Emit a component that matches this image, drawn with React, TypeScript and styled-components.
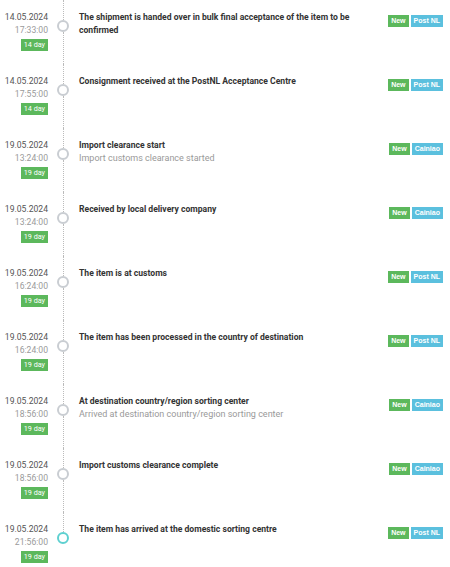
import React, { FC } from 'react'
import styled, { createGlobalStyle } from 'styled-components'

type TrackEvent = {
  date: string
  time: string
  days: number
  title: string
  note?: string
  carrier: 'Post NL' | 'Cainiao'
}

const events: TrackEvent[] = [
  { date: '14.05.2024', time: '17:33:00', days: 14, title: 'The shipment is handed over in bulk final acceptance of the item to be confirmed', carrier: 'Post NL' },
  { date: '14.05.2024', time: '17:55:00', days: 14, title: 'Consignment received at the PostNL Acceptance Centre', carrier: 'Post NL' },
  { date: '19.05.2024', time: '13:24:00', days: 19, title: 'Import clearance start', note: 'Import customs clearance started', carrier: 'Cainiao' },
  { date: '19.05.2024', time: '13:24:00', days: 19, title: 'Received by local delivery company', carrier: 'Cainiao' },
  { date: '19.05.2024', time: '16:24:00', days: 19, title: 'The item is at customs', carrier: 'Post NL' },
  { date: '19.05.2024', time: '16:24:00', days: 19, title: 'The item has been processed in the country of destination', carrier: 'Post NL' },
  { date: '19.05.2024', time: '18:56:00', days: 19, title: 'At destination country/region sorting center', note: 'Arrived at destination country/region sorting center', carrier: 'Cainiao' },
  { date: '19.05.2024', time: '18:56:00', days: 19, title: 'Import customs clearance complete', carrier: 'Cainiao' },
  { date: '19.05.2024', time: '21:56:00', days: 19, title: 'The item has arrived at the domestic sorting centre', carrier: 'Post NL' }
]

const GlobalStyle = createGlobalStyle`
  body {
    margin: 0;
    background: #fff;
    font-family: Roboto, "Liberation Sans", Arial, sans-serif;
    color: #333;
  }
`

const TrackTimeline: FC = (): JSX.Element => (
  <Timeline>
    {events.map((e, i) => (
      <Row key={i}>
        <When>
          <DateText>{e.date}</DateText>
          <TimeText>{e.time}</TimeText>
          <DayBadge>{e.days} day</DayBadge>
        </When>
        <Rail>
          <Segment />
          <Dot last={i === events.length - 1} />
          <Segment hidden={i === events.length - 1} grow />
        </Rail>
        <Body>
          <Title>{e.title}</Title>
          {e.note && <Note>{e.note}</Note>}
        </Body>
        <Tags>
          <Tag color='#5cb85c'>New</Tag>
          <Tag color='#5bc0de'>{e.carrier}</Tag>
        </Tags>
      </Row>
    ))}
  </Timeline>
)

const App: FC = () => (
  <>
    <GlobalStyle />
    <TrackTimeline />
  </>
)

const Timeline = styled.div`
  display: flex;
  flex-direction: column;
  padding-right: 7px;
`

const Row = styled.div`
  display: grid;
  grid-template-columns: 48px 30px 1fr auto;
  height: 64px;
`

const When = styled.div`
  display: flex;
  flex-direction: column;
  align-items: flex-end;
  padding-top: 11px;
  line-height: 13px;
  font-size: 8.6px;
`

const DateText = styled.span`
  color: #555;
`

const TimeText = styled.span`
  color: #9a9a9a;
`

const DayBadge = styled.span`
  margin-top: 2px;
  background: #5cb85c;
  color: #fff;
  font-size: 7.2px;
  line-height: 12px;
  height: 12px;
  padding: 0 3px;
`

const Rail = styled.div`
  display: flex;
  flex-direction: column;
  align-items: center;
`

const Segment = styled.div<{ grow?: boolean, hidden?: boolean }>`
  height: ${({ grow }) => (grow ? 'auto' : '20px')};
  flex: ${({ grow }) => (grow ? 1 : 'none')};
  border-left: 1px dotted ${({ hidden }) => (hidden ? 'transparent' : '#bbb')};
`

const Dot = styled.div<{ last?: boolean }>`
  width: 12px;
  height: 12px;
  box-sizing: border-box;
  border-radius: 50%;
  border: 2px solid ${({ last }) => (last ? '#5ed0d0' : '#c9cdd2')};
  background: #fff;
`

const Body = styled.div`
  padding: 11px 0 0 1px;
  line-height: 13px;
`

const Title = styled.div`
  font-weight: 700;
  font-size: 8.6px;
  color: #333;
  max-width: 290px;
`

const Note = styled.div`
  font-size: 9px;
  color: #999;
`

const Tags = styled.div`
  display: flex;
  gap: 2px;
  padding-top: 15px;
  align-items: flex-start;
`

const Tag = styled.span<{ color: string }>`
  background: ${({ color }) => color};
  color: #fff;
  font-family: "Liberation Sans", Arial, sans-serif;
  font-weight: 700;
  font-size: 7px;
  line-height: 12px;
  height: 12px;
  padding: 0 3px;
`

export default App
